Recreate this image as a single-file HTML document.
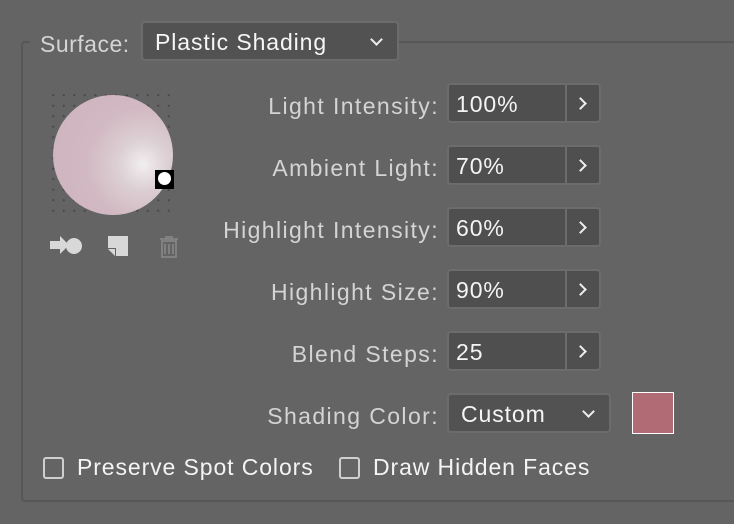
<!DOCTYPE html>
<html><head><style>
body{margin:0;width:734px;height:524px;background:#646464;font-family:"Liberation Sans",sans-serif;position:relative;overflow:hidden;letter-spacing:0.9px}
.abs{position:absolute}
.fs{left:21px;top:41px;width:730px;height:461px;border:2px solid #575757;border-radius:4px;box-sizing:border-box}
.lbl{position:absolute;color:#d4d4d4;font-size:23px;text-align:right;right:295px;white-space:nowrap;letter-spacing:1.4px}
.inp{position:absolute;left:447px;width:154px;height:40px;background:#4f4f4f;border:2px solid #6c6c6c;border-radius:4px;box-sizing:border-box;color:#f4f4f4;font-size:23px}
.inp span{position:absolute;left:7px;top:6px}
.inp i{position:absolute;left:116px;top:0;bottom:0;border-left:2px solid #6c6c6c}
.inp b{position:absolute;right:14px;width:7px;height:7px;border-right:2px solid #eee;border-top:2px solid #eee;transform:rotate(45deg);top:14px}
.dd{position:absolute;height:40px;background:#525252;border:2px solid #6c6c6c;border-radius:4px;box-sizing:border-box;color:#f6f6f6;font-size:23px}
.dd span{position:absolute;left:12px;top:6px}
.dd b{position:absolute;right:16px;top:12px;width:7px;height:7px;border-right:2px solid #eee;border-bottom:2px solid #eee;transform:rotate(45deg)}
.cb{position:absolute;top:457px;width:21px;height:22px;border:2px solid #cfcfcf;border-radius:3px;box-sizing:border-box}
.ct{position:absolute;top:454px;color:#f4f4f4;font-size:23px}
</style></head><body>
<div class="abs fs"></div>
<div class="abs" style="left:30px;top:25px;width:112px;height:30px;background:#646464"></div>
<div class="abs" style="left:40px;top:31px;color:#d4d4d4;font-size:23px;letter-spacing:0.5px">Surface:</div>
<div class="dd" style="left:141px;top:21px;width:258px"><span>Plastic Shading</span><b></b></div>

<div class="abs" style="left:48px;top:90px;width:128px;height:128px;background-image:radial-gradient(circle,#4a4a4a 1px,transparent 1.2px);background-size:10.5px 10.5px"></div>
<div class="abs" style="left:53px;top:95px;width:120px;height:120px;border-radius:50%;background:radial-gradient(circle at 75% 58%,#f2eeef 0,#dcd0d4 22%,#d2b8c2 50%,#ccb3bd 100%)"></div>
<div class="abs" style="left:155px;top:170px;width:19px;height:19px;background:#000"></div>
<div class="abs" style="left:158px;top:172px;width:13px;height:13px;border-radius:50%;background:#fff"></div>

<svg class="abs" style="left:48px;top:233px" width="140" height="30">
<path d="M2 8h10V3l9 9-9 9v-5H2z" fill="#d8d8d8"/>
<circle cx="26" cy="13" r="8" fill="#d8d8d8"/>
<path d="M60 3h20v20H68v-8h-8z" fill="#d8d8d8"/><path d="M60 16h7v7z" fill="#d8d8d8"/>
<g fill="none" stroke="#8a8a8a" stroke-width="1.5"><path d="M112 6h18M118 6v-2h6v2M114 8h14v16h-14z M117 11v10M121 11v10M125 11v10"/></g>
</svg>

<div class="lbl" style="top:93px">Light Intensity:</div>
<div class="inp" style="top:83px"><span>100%</span><i></i><b></b></div>
<div class="lbl" style="top:155px">Ambient Light:</div>
<div class="inp" style="top:145px"><span>70%</span><i></i><b></b></div>
<div class="lbl" style="top:217px">Highlight Intensity:</div>
<div class="inp" style="top:207px"><span>60%</span><i></i><b></b></div>
<div class="lbl" style="top:279px">Highlight Size:</div>
<div class="inp" style="top:269px"><span>90%</span><i></i><b></b></div>
<div class="lbl" style="top:341px">Blend Steps:</div>
<div class="inp" style="top:331px"><span>25</span><i></i><b></b></div>
<div class="lbl" style="top:403px">Shading Color:</div>
<div class="dd" style="left:447px;top:393px;width:164px"><span>Custom</span><b></b></div>
<div class="abs" style="left:632px;top:392px;width:42px;height:42px;background:#b06b75;border:1px solid #fff;box-sizing:border-box"></div>

<div class="cb" style="left:43px"></div><div class="ct" style="left:77px">Preserve Spot Colors</div>
<div class="cb" style="left:339px"></div><div class="ct" style="left:373px">Draw Hidden Faces</div>
</body></html>
